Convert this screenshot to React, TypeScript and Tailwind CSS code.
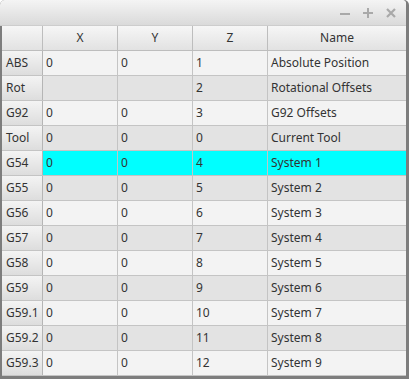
const rows: { label: string; x: string; y: string; z: string; name: string; active?: boolean }[] = [
  { label: 'ABS', x: '0', y: '0', z: '1', name: 'Absolute Position' },
  { label: 'Rot', x: '', y: '', z: '2', name: 'Rotational Offsets' },
  { label: 'G92', x: '0', y: '0', z: '3', name: 'G92 Offsets' },
  { label: 'Tool', x: '0', y: '0', z: '0', name: 'Current Tool' },
  { label: 'G54', x: '0', y: '0', z: '4', name: 'System 1', active: true },
  { label: 'G55', x: '0', y: '0', z: '5', name: 'System 2' },
  { label: 'G56', x: '0', y: '0', z: '6', name: 'System 3' },
  { label: 'G57', x: '0', y: '0', z: '7', name: 'System 4' },
  { label: 'G58', x: '0', y: '0', z: '8', name: 'System 5' },
  { label: 'G59', x: '0', y: '0', z: '9', name: 'System 6' },
  { label: 'G59.1', x: '0', y: '0', z: '10', name: 'System 7' },
  { label: 'G59.2', x: '0', y: '0', z: '11', name: 'System 8' },
  { label: 'G59.3', x: '0', y: '0', z: '12', name: 'System 9' },
];

const cols = 'grid grid-cols-[41px_75px_75px_75px_1fr]';

export default function App() {
  return (
    <div
      className="w-[409px] h-[379px] bg-[#7d7d7d] rounded-t-[5px] pl-[2px] pr-[3px] pb-[3px] overflow-hidden text-[12px] text-[#333]"
      style={{ fontFamily: '"Noto Sans", "Open Sans", sans-serif' }}
    >
      <div className="h-full flex flex-col bg-[#f3f3f3] rounded-t-[4px]">
        {/* title bar */}
        <div className="h-[26px] shrink-0 flex items-center justify-end gap-[11px] pr-[9px] bg-gradient-to-b from-[#f4f4f4] to-[#dadada] border-b border-[#cdcdcd] rounded-t-[4px] -ml-[2px] pl-[2px]">
          <svg width="12" height="12" viewBox="0 0 12 12">
            <rect x="1" y="6" width="10" height="2" fill="#a9a9a9" />
          </svg>
          <svg width="12" height="12" viewBox="0 0 12 12">
            <rect x="1" y="5" width="10" height="2" fill="#a9a9a9" />
            <rect x="5" y="1" width="2" height="10" fill="#a9a9a9" />
          </svg>
          <svg width="12" height="12" viewBox="0 0 12 12">
            <path d="M2 2 L10 10 M10 2 L2 10" stroke="#a9a9a9" strokeWidth="2.2" />
          </svg>
        </div>

        {/* header */}
        <div className={`${cols} h-[25px] shrink-0 border-b border-[#bdbdbd]`}>
          <div className="bg-gradient-to-b from-[#f6f6f6] to-[#e2e2e2] border-r border-[#bdbdbd]" />
          {['X', 'Y', 'Z', 'Name'].map((h) => (
            <div
              key={h}
              className="flex items-center justify-center bg-gradient-to-b from-[#f6f6f6] to-[#e2e2e2] border-r border-[#bdbdbd] last:border-r-0"
            >
              {h}
            </div>
          ))}
        </div>

        {/* rows */}
        {rows.map((r, i) => {
          const bg = r.active ? 'bg-[#00ffff]' : i % 2 === 0 ? 'bg-[#f3f3f3]' : 'bg-[#e3e3e3]';
          return (
            <div key={r.label} className={`${cols} h-[25px] shrink-0 border-b border-[#c4c4c4]`}>
              <div className="flex items-center pl-[4px] bg-gradient-to-b from-[#f4f4f4] to-[#dddddd] border-r border-[#b5b5b5]">
                {r.label}
              </div>
              {[r.x, r.y, r.z, r.name].map((v, j) => (
                <div
                  key={j}
                  className={`flex items-center pl-[3px] border-r border-[#c4c4c4] last:border-r-0 ${bg}`}
                >
                  {v}
                </div>
              ))}
            </div>
          );
        })}
        <div className="flex-1 bg-[#f3f3f3]" />
      </div>
    </div>
  );
}
